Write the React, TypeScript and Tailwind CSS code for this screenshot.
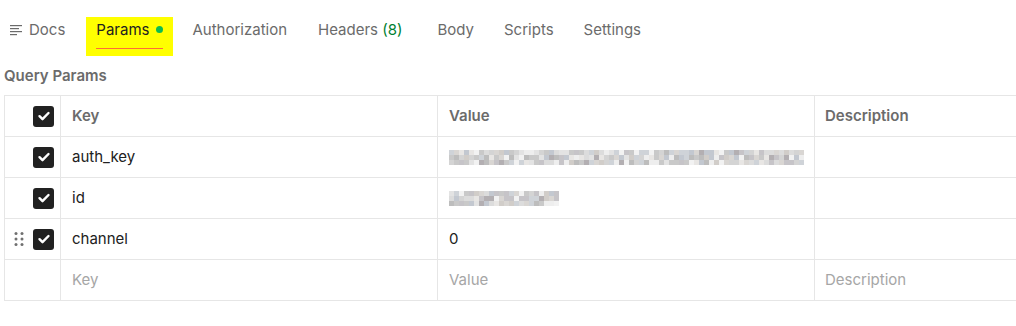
import React from 'react';

const font = { fontFamily: 'Inter, "Noto Sans", sans-serif' };

// deterministic greys for the blurred values
function blurColors(count: number, seed: number) {
    const palette = ['#d4d4d4', '#c9c9c9', '#e3e3e3', '#bdbdbd', '#d9d6d3', '#cfd3d8', '#eeeeee', '#b3afb2', '#c3c8d0', '#f2f2f2', '#d1cdc9', '#dcdcdc', '#e8e6e4', '#c6c4c8'];
    const out: string[] = [];
    for (let i = 0; i < count; i++) {
        const x = Math.sin((i + 1) * 12.9898 + seed * 78.233) * 43758.5453;
        const f = x - Math.floor(x);
        out.push(palette[Math.floor(f * palette.length)]);
    }
    return out;
}

function Blurred({ cols, seed }: { cols: number; seed: number }) {
    const rows = [0, 1, 2];
    return (
        <div className="flex flex-col">
            {rows.map((r) => (
                <div key={r} className="flex">
                    {blurColors(cols, seed + r * 17).map((c, i) => (
                        <div key={i} className="w-[5px] h-[5px]" style={{ backgroundColor: c }} />
                    ))}
                </div>
            ))}
        </div>
    );
}

function Checkbox() {
    return (
        <div className="w-[21px] h-[21px] rounded-[3px] bg-[#212121] flex items-center justify-center">
            <svg width="14" height="14" viewBox="0 0 14 14" fill="none">
                <path d="M2.5 7.2l3 3 6-6.2" stroke="white" strokeWidth="2.4" strokeLinecap="round" strokeLinejoin="round" />
            </svg>
        </div>
    );
}

function DragHandle() {
    return (
        <svg width="10" height="16" viewBox="0 0 10 16" fill="#707070">
            <circle cx="2" cy="2.5" r="1.5" />
            <circle cx="8" cy="2.5" r="1.5" />
            <circle cx="2" cy="8" r="1.5" />
            <circle cx="8" cy="8" r="1.5" />
            <circle cx="2" cy="13.5" r="1.5" />
            <circle cx="8" cy="13.5" r="1.5" />
        </svg>
    );
}

type Row = { key: string; value?: React.ReactNode; checked: boolean; drag?: boolean; header?: boolean; placeholder?: boolean };

const rows: Row[] = [
    { key: 'Key', value: 'Value', checked: true, header: true },
    { key: 'auth_key', value: <Blurred cols={71} seed={3} />, checked: true },
    { key: 'id', value: <Blurred cols={22} seed={41} />, checked: true },
    { key: 'channel', value: '0', checked: true, drag: true },
    { key: 'Key', value: 'Value', checked: false, placeholder: true },
];

export default function App() {
    const tabs = ['Authorization', 'Headers', 'Body', 'Scripts', 'Settings'];
    return (
        <div className="w-[1016px] h-[326px] overflow-hidden bg-white text-[15px]" style={font}>
            <div className="flex items-start h-[39px] mt-[17px] pl-[10px] text-[#6b6b6b] leading-[20px]">
                <div className="flex items-center gap-[7px] pr-[21px] pt-[3px]">
                    <svg width="12" height="12" viewBox="0 0 12 12" fill="#6b6b6b">
                        <rect x="0" y="1" width="12" height="1.2" />
                        <rect x="0" y="4" width="9" height="1.2" />
                        <rect x="0" y="7" width="12" height="1.2" />
                        <rect x="0" y="10" width="7" height="1.2" />
                    </svg>
                    <span>Docs</span>
                </div>
                <div className="h-[39px] bg-[#ffff00] px-[10px] pt-[3px] flex flex-col">
                    <div className="flex items-center gap-[7px] text-[#212121]">
                        <span>Params</span>
                        <span className="w-[7px] h-[7px] rounded-full bg-[#0cbb52] mb-[2px]" />
                    </div>
                    <div className="h-[1px] bg-[#ff6c37] mt-[8px]" />
                </div>
                {tabs.map((t) => (
                    <span
                        key={t}
                        className={`pt-[3px] ${t === 'Authorization' ? 'ml-[19px]' : t === 'Headers' ? 'ml-[31px]' : t === 'Body' ? 'ml-[35px]' : 'ml-[30px]'}`}
                    >
                        {t}
                        {t === 'Headers' && (
                            <>
                                {' '}
                                <span className="text-[#007f31]">(8)</span>
                            </>
                        )}
                    </span>
                ))}
            </div>
            <div className="pl-[4px] pt-[10px] pb-[9px] font-semibold text-[#6b6b6b] leading-[20px]">Query Params</div>
            <div className="ml-[4px] w-[1030px] border-t border-l border-[#e6e6e6]">
                {rows.map((r, i) => (
                    <div key={i} className="grid grid-cols-[56px_377px_377px_1fr] h-[41px] border-b border-[#e6e6e6]">
                        <div className="flex items-center justify-between pl-[9px] pr-[6px] border-r border-[#e6e6e6]">
                            <div className="flex">{r.drag && <DragHandle />}</div>
                            {r.checked && <Checkbox />}
                        </div>
                        <div
                            className={`flex items-center pl-[11px] border-r border-[#e6e6e6] ${r.header ? 'font-semibold text-[#6b6b6b]' : r.placeholder ? 'text-[#a6a6a6]' : 'text-[#212121]'}`}
                        >
                            {r.key}
                        </div>
                        <div
                            className={`flex items-center pl-[11px] border-r border-[#e6e6e6] ${r.header ? 'font-semibold text-[#6b6b6b]' : r.placeholder ? 'text-[#a6a6a6]' : 'text-[#212121]'}`}
                        >
                            {r.value}
                        </div>
                        <div
                            className={`flex items-center pl-[10px] border-r border-[#e6e6e6] ${r.header ? 'font-semibold text-[#6b6b6b]' : 'text-[#a6a6a6]'}`}
                        >
                            {r.header ? 'Description' : r.placeholder ? 'Description' : ''}
                        </div>
                    </div>
                ))}
            </div>
        </div>
    );
}
